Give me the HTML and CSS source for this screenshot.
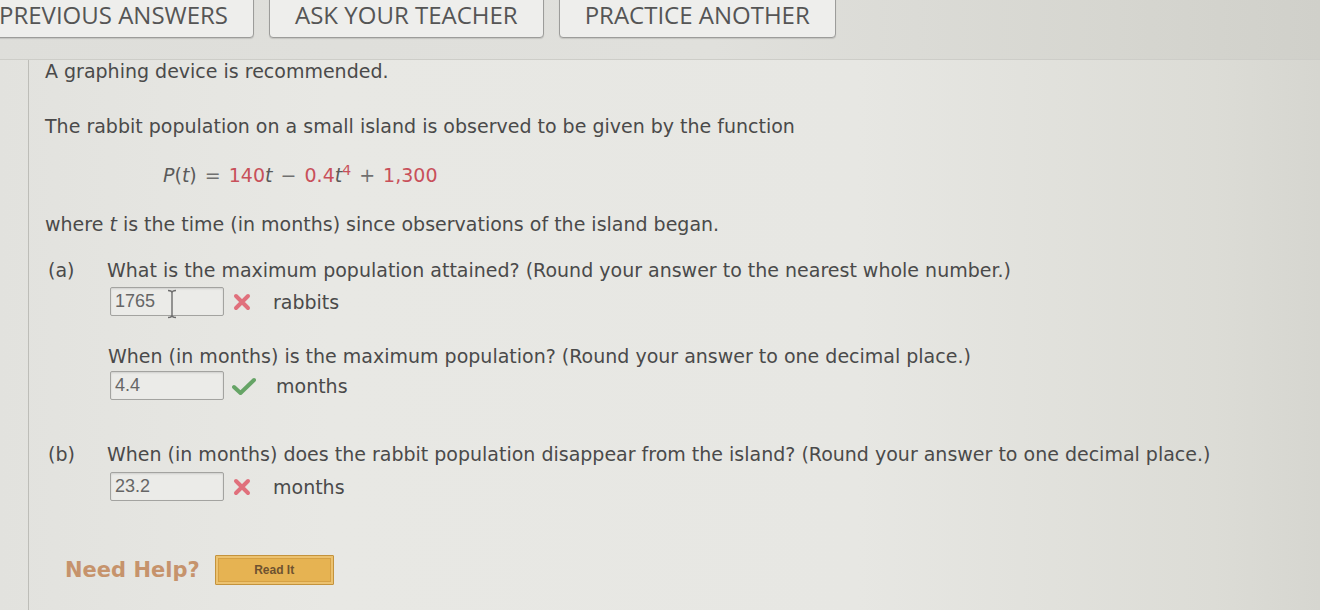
FILE: index.html
```html
<!DOCTYPE html>
<html lang="en">
<head>
<meta charset="utf-8">
<title>Rabbit population</title>
<link rel="stylesheet" href="styles.css">
</head>
<body>
  <div class="toolbar">
    <button class="tb-btn">PREVIOUS ANSWERS</button>
    <button class="tb-btn">ASK YOUR TEACHER</button>
    <button class="tb-btn">PRACTICE ANOTHER</button>
  </div>

  <main class="panel">
    <p class="note">A graphing device is recommended.</p>
    <p class="intro">The rabbit population on a small island is observed to be given by the function</p>
    <p class="formula">
      <i>P</i>(<i>t</i>) <span class="op">=</span> <span class="num">140</span><i>t</i> <span class="op">&minus;</span> <span class="num">0.4</span><i>t</i><sup class="num">4</sup> <span class="op">+</span> <span class="num">1,300</span>
    </p>
    <p class="where">where <i>t</i> is the time (in months) since observations of the island began.</p>

    <section class="part part-a">
      <span class="part-label">(a)</span>
      <div class="part-body">
        <p class="q">What is the maximum population attained? (Round your answer to the nearest whole number.)</p>
        <div class="answer">
          <span class="field">1765
            <svg class="ibeam" width="10" height="30" viewBox="0 0 10 30" aria-hidden="true">
              <path d="M1 1.5 Q5 1.5 5 4 Q5 1.5 9 1.5 M5 4 V26 M1 28.5 Q5 28.5 5 26 Q5 28.5 9 28.5" fill="none" stroke="#6d6d6d" stroke-width="1.4"/>
            </svg>
          </span>
          <svg class="mark" width="20" height="20" viewBox="0 0 20 20" aria-hidden="true">
            <path d="M4 4 L16 16 M16 4 L4 16" stroke="#e0707c" stroke-width="4" stroke-linecap="round"/>
          </svg>
          <span class="unit">rabbits</span>
        </div>
        <p class="q q-next">When (in months) is the maximum population? (Round your answer to one decimal place.)</p>
        <div class="answer answer-tight">
          <span class="field">4.4</span>
          <svg class="mark" width="24" height="20" viewBox="0 0 24 20" aria-hidden="true">
            <path d="M2 11 L8.5 17 L22 4" fill="none" stroke="#66a466" stroke-width="4" stroke-linecap="round" stroke-linejoin="round"/>
          </svg>
          <span class="unit">months</span>
        </div>
      </div>
    </section>

    <section class="part part-b">
      <span class="part-label">(b)</span>
      <div class="part-body">
        <p class="q">When (in months) does the rabbit population disappear from the island? (Round your answer to one decimal place.)</p>
        <div class="answer answer-b">
          <span class="field">23.2</span>
          <svg class="mark" width="20" height="20" viewBox="0 0 20 20" aria-hidden="true">
            <path d="M4 4 L16 16 M16 4 L4 16" stroke="#e0707c" stroke-width="4" stroke-linecap="round"/>
          </svg>
          <span class="unit">months</span>
        </div>
      </div>
    </section>

    <div class="help">
      <span class="help-text">Need Help?</span>
      <button class="read-it">Read It</button>
    </div>
  </main>
</body>
</html>
```

FILE: styles.css
```css
html, body {
  margin: 0;
  height: 610px;
  overflow: hidden;
}

body {
  background: linear-gradient(90deg, #e2e2de 0%, #e8e8e4 25%, #e7e7e3 65%, #dcdcd6 92%, #d6d6d0 100%);
  font-family: "DejaVu Sans", Verdana, sans-serif;
  font-size: 19px;
  color: #4a4a4a;
}

/* top bar with the three action buttons */
.toolbar {
  display: flex;
  align-items: flex-start;
  gap: 15px;
  height: 59px;
  margin-left: -27px;
  border-bottom: 1px solid #cdcdc8;
  background: linear-gradient(90deg, #dededa 0%, #e0e0dc 55%, #d6d6d0 85%, #d0d0ca 100%);
}

.tb-btn {
  box-sizing: border-box;
  margin-top: -8px;
  height: 46px;
  padding: 0 25px;
  font-family: "Open Sans", "DejaVu Sans", sans-serif;
  font-size: 24px;
  line-height: 24px;
  color: #555;
  background: #eeeeec;
  border: 1px solid #9c9c9a;
  border-radius: 4px;
  box-shadow: 0 1px 1px rgba(0, 0, 0, 0.12);
}

/* question panel */
.panel {
  margin-left: 28px;
  padding-left: 16px;
  border-left: 1px solid #bdbdb8;
  height: 550px;
}

p {
  margin: 0;
  line-height: 22px;
}

.intro { margin-top: 33px; }

.formula {
  margin-top: 27px;
  padding-left: 118px;
  color: #5a5a5a;
  word-spacing: 2px;
}

.formula .num { color: #c8505a; }
.formula .op { color: #707070; }
.formula sup { font-size: 14px; line-height: 0; }

.where { margin-top: 27px; }

.part {
  display: flex;
  margin-left: 3px;
}

.part-a { margin-top: 24px; }
.part-b { margin-top: 43px; }

.part-label {
  flex: 0 0 59px;
  line-height: 22px;
}

.answer {
  display: flex;
  align-items: center;
  margin-top: 6px;
  margin-left: 3px;
}

.answer-tight { margin-top: 4px; }
.answer-b { margin-top: 7px; }

.q-next { margin-top: 29px; margin-left: 1px; }

.field {
  position: relative;
  box-sizing: border-box;
  width: 114px;
  height: 29px;
  padding: 3px 0 0 4px;
  font-family: "Liberation Sans", Arial, sans-serif;
  font-size: 18px;
  color: #666;
  background: #ebebe8;
  border: 1px solid #a3a3a0;
  border-radius: 2px;
  box-shadow: inset 0 1px 2px rgba(0, 0, 0, 0.12);
}

/* text cursor resting over the first field */
.ibeam {
  position: absolute;
  left: 56px;
  top: 1px;
}

.mark {
  margin-left: 8px;
}

.unit {
  margin-left: 21px;
}

.answer-tight .unit { margin-left: 20px; }

/* help row */
.help {
  display: flex;
  align-items: center;
  gap: 15px;
  margin-top: 54px;
  padding-left: 20px;
}

.help-text {
  font-family: "DejaVu Sans", Verdana, sans-serif;
  font-weight: bold;
  font-size: 21px;
  color: #c6936c;
}

.read-it {
  width: 119px;
  height: 30px;
  font-family: "Liberation Sans", Arial, sans-serif;
  font-weight: bold;
  font-size: 12px;
  color: #6e5230;
  background: #e6b352;
  border: 1px solid #c4933c;
  box-shadow: inset 0 0 0 2px #ecc270, inset 0 0 0 3px #d6a144;
  border-radius: 1px;
}
```
